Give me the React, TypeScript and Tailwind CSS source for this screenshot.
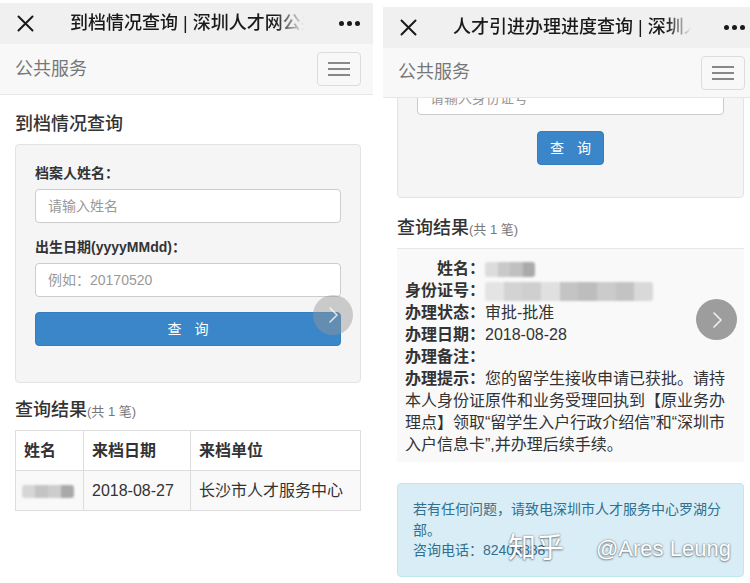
import React from 'react';

const FONT = "font-['Liberation_Sans','Noto_Sans_CJK_SC',sans-serif]";

function CloseIcon() {
  return (
    <svg width="17" height="17" viewBox="0 0 17 17" className="shrink-0">
      <path d="M1.5 1.5 L15.5 15.5 M15.5 1.5 L1.5 15.5" stroke="#1a1a1a" strokeWidth="2" strokeLinecap="round" />
    </svg>
  );
}

function MoreDots() {
  return (
    <div className="flex items-center gap-[3px]">
      <span className="w-[5px] h-[5px] rounded-full bg-[#1a1a1a]" />
      <span className="w-[5px] h-[5px] rounded-full bg-[#1a1a1a]" />
      <span className="w-[5px] h-[5px] rounded-full bg-[#1a1a1a]" />
    </div>
  );
}

function Hamburger() {
  return (
    <div className="w-[44px] h-[34px] border border-[#dcdcdc] rounded-[4px] flex flex-col items-center justify-center gap-[4px] bg-[#f8f8f8]">
      <span className="w-[22px] h-[2px] bg-[#888]" />
      <span className="w-[22px] h-[2px] bg-[#888]" />
      <span className="w-[22px] h-[2px] bg-[#888]" />
    </div>
  );
}

function Chevron({ stroke }: { stroke: string }) {
  return (
    <svg width="14" height="18" viewBox="0 0 14 18">
      <path d="M4 2 L11 9 L4 16" fill="none" stroke={stroke} strokeWidth="1.6" strokeLinecap="round" strokeLinejoin="round" />
    </svg>
  );
}

function Blur({ w, h, shades }: { w: number; h: number; shades: string[] }) {
  return (
    <span className="inline-flex align-middle blur-[1.2px] overflow-hidden rounded-[3px]" style={{ width: w, height: h }}>
      {shades.map((c, i) => (
        <span key={i} className="flex-1 h-full" style={{ backgroundColor: c }} />
      ))}
    </span>
  );
}

function LeftPanel() {
  return (
    <div className="w-[373px] shrink-0 relative">
      <div className="h-[41px] mt-[3px] bg-[#f0f0f0] flex items-center">
        <div className="ml-[17px]"><CloseIcon /></div>
        <div className="ml-[36px] w-[234px] overflow-hidden whitespace-nowrap text-[18px] text-[#1a1a1a] font-medium [mask-image:linear-gradient(to_right,black_88%,transparent)]">
          到档情况查询 | 深圳人才网公共服务
        </div>
        <div className="ml-auto mr-[13px]"><MoreDots /></div>
      </div>
      <div className="h-[51px] bg-[#f8f8f8] border-b border-[#e6e6e6] flex items-center justify-between pl-[15px] pr-[12px]">
        <span className="text-[18px] text-[#777]">公共服务</span>
        <Hamburger />
      </div>

      <div className="px-[15px] pr-[12px]">
        <h2 className="text-[18px] text-[#333] font-medium mt-[17px] leading-[24px]">到档情况查询</h2>
        <div className="mt-[8px] bg-[#f5f5f5] border border-[#e3e3e3] rounded-[4px] px-[19px] pt-[18px] pb-[36px]">
          <div className="text-[14px] font-bold text-[#333] leading-[20px]">档案人姓名：</div>
          <div className="mt-[6px] h-[34px] bg-white border border-[#ccc] rounded-[4px] flex items-center px-[12px] text-[14px] text-[#999]">请输入姓名</div>
          <div className="mt-[14px] text-[14px] font-bold text-[#333] leading-[20px]">出生日期(yyyyMMdd)：</div>
          <div className="mt-[6px] h-[34px] bg-white border border-[#ccc] rounded-[4px] flex items-center px-[12px] text-[14px] text-[#999]">例如：20170520</div>
          <div className="mt-[15px] h-[34px] bg-[#3b86c8] border border-[#357ebd] rounded-[4px] flex items-center justify-center gap-[13px] text-[14px] text-white">
            <span>查</span><span>询</span>
          </div>
        </div>

        <div className="mt-[15px] flex items-baseline leading-[24px]">
          <span className="text-[18px] text-[#333] font-medium">查询结果</span>
          <span className="text-[13px] text-[#777]">(共 1 笔)</span>
        </div>
        <table className="mt-[6px] w-full border-collapse text-[16px] text-[#333]">
          <thead>
            <tr className="h-[40px] bg-white">
              <th className="border border-[#ddd] text-left font-bold px-[8px] w-[68px]">姓名</th>
              <th className="border border-[#ddd] text-left font-bold px-[8px] w-[107px]">来档日期</th>
              <th className="border border-[#ddd] text-left font-bold px-[8px]">来档单位</th>
            </tr>
          </thead>
          <tbody>
            <tr className="h-[40px] bg-[#f9f9f9]">
              <td className="border border-[#ddd] px-[6px]">
                <Blur w={52} h={13} shades={['#d6d6d6', '#c4c4c4', '#cdcdcd', '#a9a9a9']} />
              </td>
              <td className="border border-[#ddd] px-[8px]">2018-08-27</td>
              <td className="border border-[#ddd] px-[8px] whitespace-nowrap">长沙市人才服务中心</td>
            </tr>
          </tbody>
        </table>
      </div>

      <div className="absolute left-[313px] top-[295px] w-[40px] h-[40px] rounded-full bg-[rgba(150,150,150,0.45)] flex items-center justify-center">
        <Chevron stroke="rgba(255,255,255,0.75)" />
      </div>
    </div>
  );
}

function RightPanel() {
  return (
    <div className="flex-1 relative">
      <div className="h-[41px] mt-[7px] bg-[#f0f0f0] flex items-center">
        <div className="ml-[17px]"><CloseIcon /></div>
        <div className="ml-[36px] w-[238px] overflow-hidden whitespace-nowrap text-[18px] text-[#1a1a1a] font-medium [mask-image:linear-gradient(to_right,black_90%,transparent)]">
          人才引进办理进度查询 | 深圳人才网
        </div>
        <div className="ml-auto mr-[5px]"><MoreDots /></div>
      </div>
      <div className="relative z-10 h-[50px] bg-[#f8f8f8] border-b border-[#e6e6e6] flex items-center justify-between pl-[15px] pr-[5px]">
        <span className="text-[18px] text-[#777]">公共服务</span>
        <Hamburger />
      </div>

      <div className="overflow-hidden pl-[14px] pr-[6px]">
        <div className="-mt-[40px] bg-[#f5f5f5] border border-[#e3e3e3] rounded-[4px] px-[19px] pt-[22px] pb-[32px]">
          <div className="h-[34px] bg-white border border-[#ccc] rounded-[4px] flex items-center px-[12px] text-[14px] text-[#999]">请输入身份证号</div>
          <div className="mt-[16px] flex justify-center">
            <div className="w-[67px] h-[34px] bg-[#3b86c8] border border-[#357ebd] rounded-[4px] flex items-center justify-center gap-[13px] text-[14px] text-white">
              <span>查</span><span>询</span>
            </div>
          </div>
        </div>

        <div className="mt-[18px] flex items-baseline leading-[24px]">
          <span className="text-[18px] text-[#333] font-medium">查询结果</span>
          <span className="text-[13px] text-[#777]">(共 1 笔)</span>
        </div>

        <div className="mt-[6px] bg-[#f9f9f9] border-t border-[#e6e6e6] pl-[8px] pr-[6px] pt-[9px] pb-[6px] text-[16px] leading-[22px] text-[#333]">
          <div>
            <span className="inline-block w-[80px] text-right font-bold">姓名：</span>
            <Blur w={50} h={15} shades={['#dcdcdc', '#c9c9c9', '#c0c0c0', '#aaaaaa']} />
          </div>
          <div>
            <span className="inline-block w-[80px] text-right font-bold">身份证号：</span>
            <Blur w={168} h={19} shades={['#e4e4e4', '#d3d3d3', '#cfcfcf', '#e0e0e0', '#c4c4c4', '#bdbdbd', '#cbcbcb', '#c3c3c3', '#d9d9d9']} />
          </div>
          <div>
            <span className="font-bold">办理状态：</span>审批-批准
          </div>
          <div>
            <span className="font-bold">办理日期：</span>2018-08-28
          </div>
          <div>
            <span className="font-bold">办理备注：</span>
          </div>
          <div>
            <span className="font-bold">办理提示：</span>您的留学生接收申请已获批。请持本人身份证原件和业务受理回执到【原业务办理点】领取“留学生入户行政介绍信”和“深圳市入户信息卡”,并办理后续手续。
          </div>
        </div>

        <div className="mt-[21px] bg-[#d9edf7] border border-[#bce8f1] rounded-[4px] px-[15px] pt-[15px] pb-[15px] text-[14px] leading-[20.5px] text-[#31708f]">
          若有任何问题，请致电深圳市人才服务中心罗湖分部。
          <br />
          咨询电话：82408888
        </div>
      </div>

      <div className="absolute left-[313px] top-[299px] w-[41px] h-[41px] rounded-full bg-[#9d9d9d] flex items-center justify-center">
        <Chevron stroke="rgba(255,255,255,0.85)" />
      </div>

      <div className="absolute left-[125px] top-[533px] whitespace-nowrap flex items-center gap-[32px] text-white [text-shadow:0_0_2px_rgba(0,0,0,0.5),0_1px_2px_rgba(0,0,0,0.35)]">
        <span className="text-[28px] leading-[32px]">知乎</span>
        <span className="text-[22px] leading-[32px]">@Ares Leung</span>
      </div>
    </div>
  );
}

export default function App() {
  return (
    <div className={`w-[750px] h-[583px] overflow-hidden bg-white flex gap-[10px] ${FONT}`}>
      <LeftPanel />
      <RightPanel />
    </div>
  );
}
